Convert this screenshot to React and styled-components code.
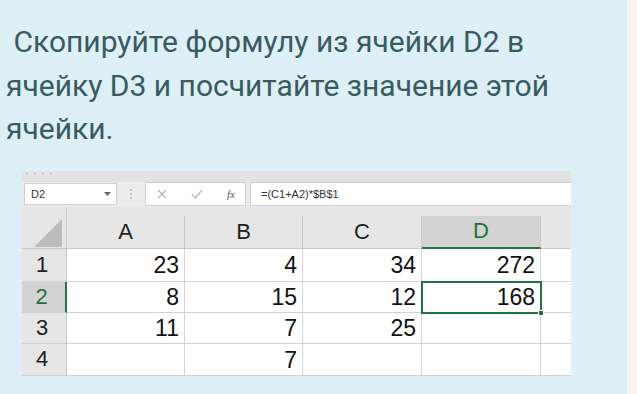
import styled, { createGlobalStyle } from "styled-components";

const GlobalStyle = createGlobalStyle`
  * { box-sizing: border-box; }
  html, body { margin: 0; padding: 0; }
  body { width: 637px; height: 394px; overflow: hidden; }
`;

const columns = ["A", "B", "C", "D"];
const rows = [
  { n: 1, cells: ["23", "4", "34", "272"] },
  { n: 2, cells: ["8", "15", "12", "168"] },
  { n: 3, cells: ["11", "7", "25", ""] },
  { n: 4, cells: ["", "7", "", ""] },
];

export default function App() {
  return (
    <Page>
      <GlobalStyle />
      <Main>
        <Question>
          {"\u00a0"}Скопируйте формулу из ячейки D2 в ячейку D3 и посчитайте
          значение этой ячейки.
        </Question>
        <Sheet>
          <TopStrip>
            <Dots>
              <i /><i /><i /><i />
            </Dots>
          </TopStrip>
          <FormulaBar>
            <NameBox>
              <span>D2</span>
              <svg width="7" height="4" viewBox="0 0 7 4">
                <path d="M0 0h7L3.5 4z" fill="#666" />
              </svg>
            </NameBox>
            <Grip>
              <i /><i /><i />
            </Grip>
            <ActionBox>
              <svg width="10" height="10" viewBox="0 0 10 10">
                <path d="M1 1l8 8M9 1l-8 8" stroke="#b5b5b5" strokeWidth="1.2" />
              </svg>
              <svg width="12" height="10" viewBox="0 0 12 10">
                <path d="M1 5.5l3.5 3.5L11 1" stroke="#b5b5b5" strokeWidth="1.2" fill="none" />
              </svg>
              <Fx>fx</Fx>
            </ActionBox>
            <FormulaBox>=(C1+A2)*$B$1</FormulaBox>
          </FormulaBar>
          <Grid>
            <Corner>
              <svg width="28" height="28" viewBox="0 0 28 28">
                <path d="M28 0V28H0z" fill="#bcbcbc" />
              </svg>
            </Corner>
            {columns.map((c) => (
              <ColHead key={c} $active={c === "D"}>
                {c}
              </ColHead>
            ))}
            <ColHead $rest />
            {rows.map((r) => (
              <Row key={r.n}>
                <RowHead $active={r.n === 2}>{r.n}</RowHead>
                {r.cells.map((v, i) => (
                  <Cell key={i} $selected={r.n === 2 && i === 3}>
                    {v}
                    {r.n === 2 && i === 3 && <Handle />}
                  </Cell>
                ))}
                <Cell $rest />
              </Row>
            ))}
          </Grid>
        </Sheet>
      </Main>
      <Strip />
    </Page>
  );
}

const Page = styled.div`
  display: flex;
  width: 637px;
  height: 394px;
`;

const Main = styled.div`
  flex: 1;
  background: #ddf0f7;
  padding: 20px 0 0 0;
`;

const Strip = styled.div`
  width: 10px;
  background: #f8f3f3;
`;

const Question = styled.p`
  margin: 0;
  padding: 0 0 0 6px;
  width: 600px;
  font-family: Roboto, "Noto Sans", sans-serif;
  font-size: 30px;
  line-height: 43.5px;
  color: #3b5a60;
`;

const Sheet = styled.div`
  margin: 20px 0 0 22px;
  width: 549px;
  background: #e6e6e6;
  font-family: "Liberation Sans", Arial, sans-serif;
`;

const TopStrip = styled.div`
  height: 11px;
  background: #e2e2e2;
  padding: 2px 0 0 4px;
`;

const Dots = styled.div`
  display: flex;
  gap: 6px;

  i {
    width: 2px;
    height: 1px;
    background: #b8b8b8;
  }
`;

const FormulaBar = styled.div`
  display: flex;
  align-items: center;
  height: 25px;
  padding: 0 0 0 2px;
  background: #ececec;
`;

const NameBox = styled.div`
  display: flex;
  align-items: center;
  justify-content: space-between;
  width: 93px;
  height: 22px;
  padding: 0 5px 0 6px;
  background: #fff;
  border: 1px solid #d0d0d0;
  font-size: 11px;
  color: #333;
`;

const Grip = styled.div`
  display: flex;
  flex-direction: column;
  gap: 2px;
  width: 28px;
  align-items: center;

  i {
    width: 2px;
    height: 2px;
    background: #c4c4c4;
  }
`;

const ActionBox = styled.div`
  display: flex;
  align-items: center;
  justify-content: space-between;
  width: 101px;
  height: 24px;
  padding: 0 10px 0 11px;
  background: #fff;
  border: 1px solid #d0d0d0;
`;

const Fx = styled.span`
  font-family: "Liberation Serif", serif;
  font-style: italic;
  font-size: 11px;
  color: #555;
`;

const FormulaBox = styled.div`
  flex: 1;
  height: 24px;
  margin-left: 4px;
  padding: 0 0 0 10px;
  background: #fff;
  border-top: 1px solid #d0d0d0;
  border-bottom: 1px solid #d0d0d0;
  border-left: 1px solid #d0d0d0;
  display: flex;
  align-items: center;
  font-size: 11px;
  color: #333;
`;

const Grid = styled.div`
  display: grid;
  grid-template-columns: 45px 118px 118px 119px 119px 30px;
  grid-template-rows: 42px 33px 31px 31px 32px;
  background: #e6e6e6;
`;

const Corner = styled.div`
  display: flex;
  align-items: flex-end;
  justify-content: flex-end;
  padding: 0 4px 1px 0;
  border-right: 1px solid #c8c8c8;
  border-bottom: 1px solid #c8c8c8;
`;

const ColHead = styled.div`
  display: flex;
  align-items: center;
  justify-content: center;
  margin-top: 9px;
  font-size: 22px;
  color: ${(p) => (p.$active ? "#217346" : "#222")};
  background: ${(p) => (p.$active ? "#d3d3d3" : "#e6e6e6")};
  border-right: ${(p) => (p.$rest ? "none" : "1px solid #c8c8c8")};
  border-bottom: ${(p) => (p.$active ? "2px solid #217346" : "1px solid #c8c8c8")};
`;

const Row = styled.div`
  display: contents;
`;

const RowHead = styled.div`
  display: flex;
  align-items: center;
  justify-content: center;
  padding-right: 4px;
  font-size: 22px;
  color: ${(p) => (p.$active ? "#217346" : "#222")};
  background: ${(p) => (p.$active ? "#d3d3d3" : "#e6e6e6")};
  border-right: ${(p) => (p.$active ? "2px solid #217346" : "1px solid #c8c8c8")};
  border-bottom: 1px solid #d0d0d0;
`;

const Cell = styled.div`
  position: relative;
  display: flex;
  align-items: center;
  justify-content: flex-end;
  padding: 2px 5px 0 0;
  font-size: 23px;
  color: #111;
  background: #fff;
  border-right: ${(p) => (p.$rest ? "none" : "1px solid #d4d4d4")};
  border-bottom: 1px solid #d4d4d4;
  outline: ${(p) => (p.$selected ? "2px solid #217346" : "none")};
  outline-offset: -1px;
  z-index: ${(p) => (p.$selected ? 1 : 0)};
`;

const Handle = styled.span`
  position: absolute;
  right: -4px;
  bottom: -4px;
  width: 6px;
  height: 6px;
  background: #217346;
  border: 1px solid #fff;
`;
